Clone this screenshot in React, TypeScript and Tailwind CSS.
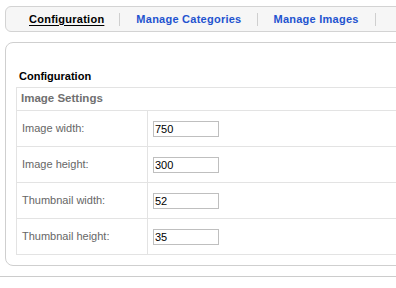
import React from "react";

const rows = [
  { label: "Image width:", value: "750" },
  { label: "Image height:", value: "300" },
  { label: "Thumbnail width:", value: "52" },
  { label: "Thumbnail height:", value: "35" },
];

export default function App() {
  return (
    <div
      className="w-[396px] h-[288px] overflow-hidden bg-white"
      style={{ fontFamily: '"Liberation Sans", Arial, sans-serif' }}
    >
      <div className="ml-[5px] mt-[6px] w-[430px] h-[26px] border border-[#d3d3d3] rounded-l-[6px] bg-[#f6f6f6] flex items-center pl-[23px]">
        <span className="text-[11px] font-bold tracking-[0.25px] text-black underline underline-offset-2 leading-none">
          Configuration
        </span>
        <span className="ml-[15px] mr-[16px] w-px h-[13px] bg-[#cfcfcf]" />
        <span className="text-[11px] font-bold tracking-[0.25px] text-[#2353cf] leading-none">Manage Categories</span>
        <span className="ml-[16px] mr-[15px] w-px h-[13px] bg-[#cfcfcf]" />
        <span className="text-[11px] font-bold tracking-[0.25px] text-[#2353cf] leading-none">Manage Images</span>
        <span className="mx-[16px] w-px h-[13px] bg-[#cfcfcf]" />
      </div>

      <div className="ml-[5px] mt-[10px] w-[430px] h-[224px] border border-[#cfcfcf] rounded-l-[8px] pt-[25px] pl-[10px]">
        <div className="h-[16px] leading-[16px] text-[11px] font-bold text-black pl-[3px]">Configuration</div>
        <table className="mt-[3px] w-[420px] border-collapse">
          <tbody>
            <tr className="h-[23px]">
              <td colSpan={2} className="border border-[#e3e3e3] pl-[4px] text-[11.5px] font-bold text-[#707070] align-middle">
                Image Settings
              </td>
            </tr>
            {rows.map((r) => (
              <tr key={r.label} className="h-[36px]">
                <td className="w-[131px] border border-[#e3e3e3] pl-[5px] text-[11px] text-[#666666] align-middle">
                  {r.label}
                </td>
                <td className="border border-[#e3e3e3] pl-[5px] align-middle">
                  <div className="w-[66px] h-[16px] border border-[#bfbfbf] bg-white text-[11px] leading-[14px] text-black pl-[1px]">
                    {r.value}
                  </div>
                </td>
              </tr>
            ))}
          </tbody>
        </table>
      </div>

      <div className="mt-[10px] h-px w-full bg-[#cccccc]" />
    </div>
  );
}
